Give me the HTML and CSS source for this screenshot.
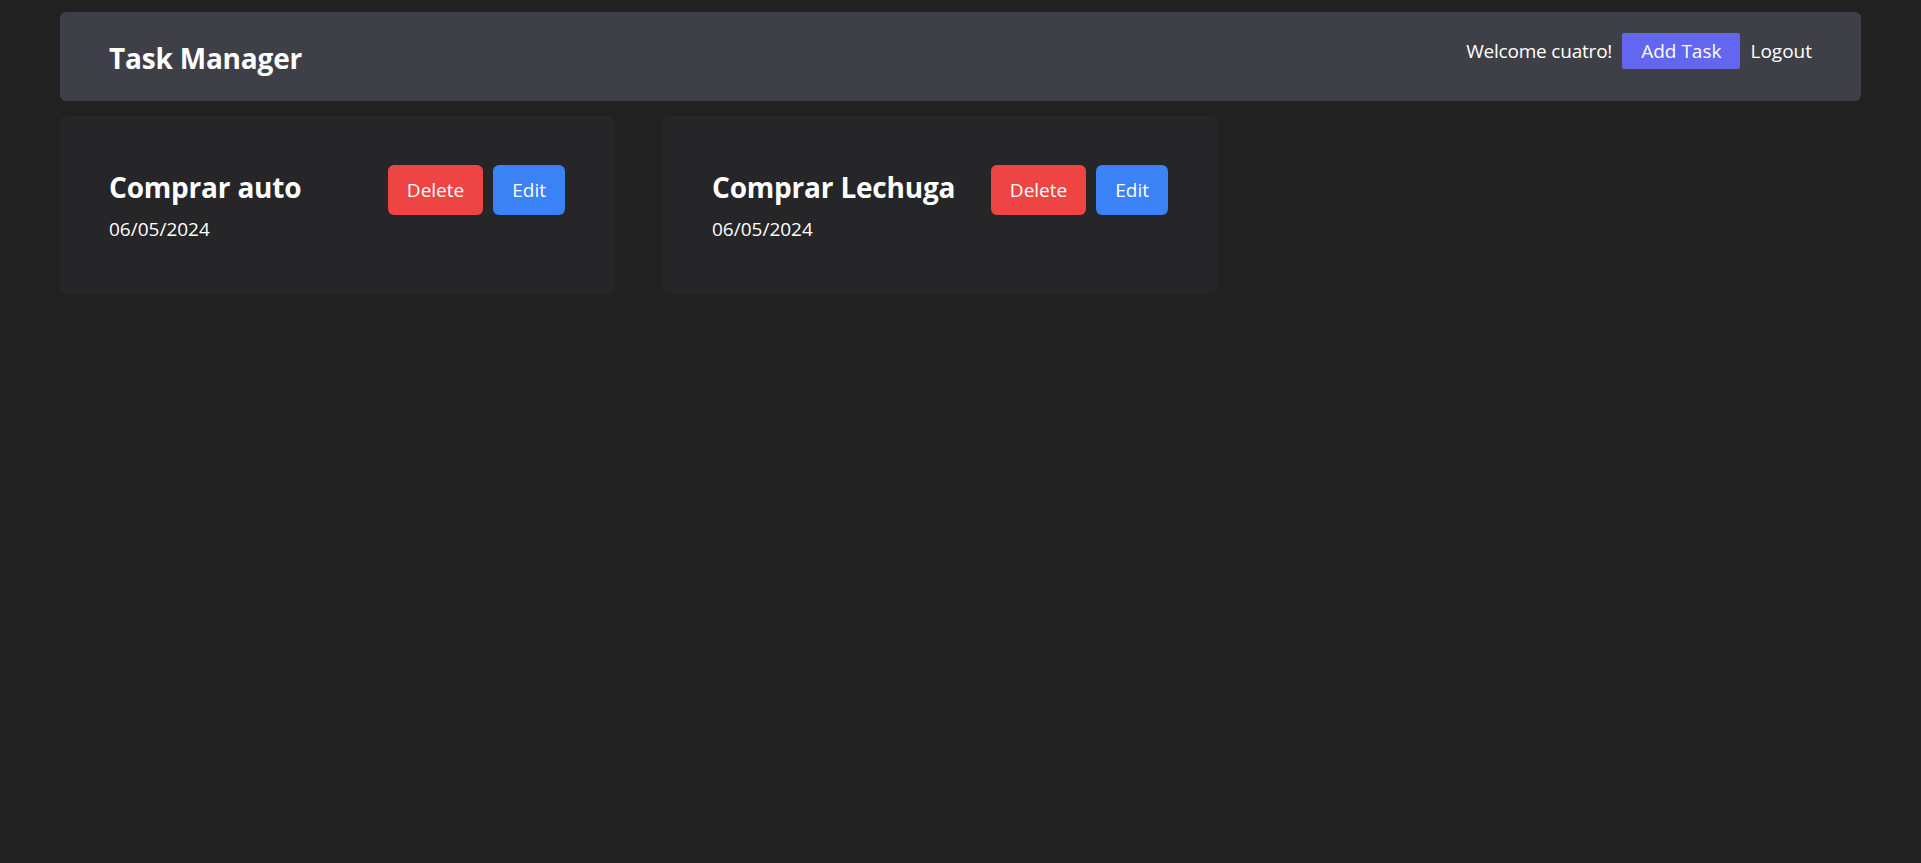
FILE: index.html
```html
<!DOCTYPE html>
<html lang="es">
<head>
<meta charset="utf-8">
<title>Task Manager</title>
<link rel="stylesheet" href="styles.css">
</head>
<body>
<div class="page">
  <header class="nav">
    <h1 class="brand">Task Manager</h1>
    <div class="nav-right">
      <span class="welcome">Welcome cuatro!</span>
      <button class="btn-add">Add Task</button>
      <button class="btn-logout">Logout</button>
    </div>
  </header>
  <main class="tasks">
    <div class="card">
      <div class="card-info">
        <h2 class="card-title">Comprar auto</h2>
        <p class="card-date">06/05/2024</p>
      </div>
      <div class="card-actions">
        <button class="btn btn-delete">Delete</button>
        <button class="btn btn-edit">Edit</button>
      </div>
    </div>
    <div class="card">
      <div class="card-info">
        <h2 class="card-title">Comprar Lechuga</h2>
        <p class="card-date">06/05/2024</p>
      </div>
      <div class="card-actions">
        <button class="btn btn-delete">Delete</button>
        <button class="btn btn-edit">Edit</button>
      </div>
    </div>
  </main>
</div>
</body>
</html>
```
FILE: styles.css
```css
* { box-sizing: border-box; }
html, body { margin: 0; padding: 0; }
body {
  background: #212121;
  color: #ffffff;
  font-family: "Open Sans", "Noto Sans", sans-serif;
  min-height: 100vh;
}
.page {
  padding: 12px 60px;
}
.nav {
  background: #3f4047;
  border-radius: 6px;
  height: 89px;
  padding: 0 49px;
  display: flex;
  justify-content: space-between;
  align-items: center;
}
.brand {
  margin: 3px 0 0;
  font-size: 28px;
  line-height: 36px;
  font-weight: 700;
  letter-spacing: -0.2px;
}
.nav-right {
  display: flex;
  align-items: center;
  gap: 10px;
  margin-top: -12px;
}
.welcome {
  font-size: 19px;
  line-height: 28px;
  letter-spacing: -0.2px;
}
.btn-add {
  background: #6366f1;
  color: #fff;
  border: 0;
  border-radius: 2px;
  font: inherit;
  font-size: 19px;
  line-height: 28px;
  padding: 4px 19px;
  cursor: pointer;
}
.btn-logout {
  background: none;
  border: 0;
  color: #fff;
  font: inherit;
  font-size: 19px;
  line-height: 28px;
  padding: 0;
  cursor: pointer;
}
.tasks {
  margin-top: 15px;
  display: flex;
  gap: 49px;
}
.card {
  width: 554px;
  height: 178px;
  background: #262628;
  border-radius: 6px;
  padding: 49px;
  display: flex;
  justify-content: space-between;
  align-items: flex-start;
}
.card-title {
  margin: 4px 0 0;
  font-size: 28px;
  line-height: 36px;
  font-weight: 700;
  letter-spacing: -0.2px;
}
.card-date {
  margin: 10px 0 0;
  font-size: 19px;
  line-height: 28px;
}
.card-actions {
  display: flex;
  gap: 10px;
}
.btn {
  border: 0;
  border-radius: 6px;
  color: #fff;
  font: inherit;
  font-size: 19px;
  line-height: 28px;
  padding: 11px 19px;
  cursor: pointer;
}
.btn-delete { background: #ef4444; }
.btn-edit { background: #3b82f6; }
```
